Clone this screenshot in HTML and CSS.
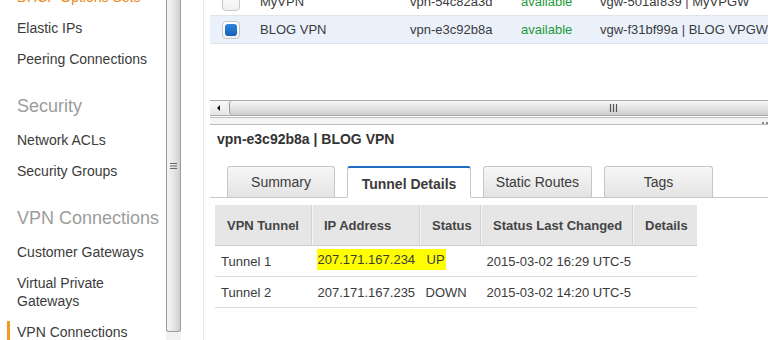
FILE: index.html
```html
<!DOCTYPE html>
<html lang="en">
<head>
    <meta charset="UTF-8">
    <title>VPN Connections</title>
    <link rel="stylesheet" href="styles.css">
</head>
<body>
    <div class="page">
        <nav class="sidebar">
            <a class="nav-item orange">DHCP Options Sets</a>
            <a class="nav-item">Elastic IPs</a>
            <a class="nav-item">Peering Connections</a>
            <h3 class="nav-heading">Security</h3>
            <a class="nav-item">Network ACLs</a>
            <a class="nav-item">Security Groups</a>
            <h3 class="nav-heading">VPN Connections</h3>
            <a class="nav-item">Customer Gateways</a>
            <a class="nav-item">Virtual Private<br>Gateways</a>
            <a class="nav-item active">VPN Connections</a>
        </nav>

        <div class="vscroll">
            <div class="vthumb">
                <svg width="7" height="8" viewBox="0 0 7 8"><path d="M0 1.5h7M0 4h7M0 6.5h7" stroke="#666" stroke-width="1"/></svg>
            </div>
        </div>

        <main class="content">
            <div class="list-pane">
                <table class="vpn-list">
                    <tr>
                        <td class="check"><span class="box"></span></td>
                        <td class="name">MyVPN</td>
                        <td>vpn-54c82a3d</td>
                        <td class="ok">available</td>
                        <td>vgw-501af839 <span class="sep">|</span> MyVPGW</td>
                    </tr>
                    <tr class="selected">
                        <td class="check"><span class="box on"></span></td>
                        <td class="name">BLOG VPN</td>
                        <td>vpn-e3c92b8a</td>
                        <td class="ok">available</td>
                        <td>vgw-f31bf99a <span class="sep">|</span> BLOG VPGW</td>
                    </tr>
                </table>
            </div>

            <div class="hscroll">
                <div class="arrow"></div>
                <div class="hthumb">
                    <svg width="9" height="8" viewBox="0 0 9 8"><path d="M1.5 0v8M4.5 0v8M7.5 0v8" stroke="#555" stroke-width="1.2"/></svg>
                </div>
            </div>
            <div class="splitter"><span class="dots"></span></div>

            <section class="details">
                <h2>vpn-e3c92b8a | BLOG VPN</h2>
                <ul class="tabs">
                    <li class="tab w-summary">Summary</li>
                    <li class="tab active w-tunnel">Tunnel Details</li>
                    <li class="tab w-routes">Static Routes</li>
                    <li class="tab w-tags">Tags</li>
                </ul>

                <table class="tunnels">
                    <thead>
                        <tr>
                            <th class="c1">VPN Tunnel</th>
                            <th class="c2">IP Address</th>
                            <th class="c3">Status</th>
                            <th class="c4">Status Last Changed</th>
                            <th class="c5">Details</th>
                        </tr>
                    </thead>
                    <tbody>
                        <tr>
                            <td>Tunnel 1</td>
                            <td class="hl-left"><span class="mark">207.171.167.234</span></td>
                            <td class="hl-right"><span class="mark">UP</span></td>
                            <td>2015-03-02 16:29 UTC-5</td>
                            <td></td>
                        </tr>
                        <tr>
                            <td>Tunnel 2</td>
                            <td>207.171.167.235</td>
                            <td>DOWN</td>
                            <td>2015-03-02 14:20 UTC-5</td>
                            <td></td>
                        </tr>
                    </tbody>
                </table>
            </section>
        </main>
    </div>
</body>
</html>
```

FILE: styles.css
```css
body {
    margin: 0;
    padding: 0;
    background-color: #fff;
    font-family: "Liberation Sans", Arial, sans-serif;
    color: #333;
}

.page {
    display: flex;
    width: 768px;
    height: 340px;
    overflow: hidden;
}

/* Sidebar */
.sidebar {
    width: 166px;
    flex-shrink: 0;
    margin-top: -18px;
}

.nav-item {
    display: block;
    padding: 6px 0 7px 17px;
    font-size: 14px;
    line-height: 18px;
    color: #3b3b3b;
}

.nav-item.orange {
    color: #ec8a1c;
}

.nav-item.active {
    background: linear-gradient(#f39a22, #f39a22) 7px 4px / 3px 100% no-repeat;
}

.nav-heading {
    margin: 20px 0 8px;
    padding-left: 17px;
    font-size: 18px;
    line-height: 22px;
    font-weight: normal;
    color: #9c9c9c;
}

/* Vertical scrollbar */
.vscroll {
    width: 15px;
    flex-shrink: 0;
    background-color: #f1f1f1;
}

.vthumb {
    height: 332px;
    box-sizing: border-box;
    border: 1px solid #9a9a9a;
    border-top: none;
    border-radius: 0 0 3px 3px;
    background: linear-gradient(to right, #f4f4f4, #e8e8e8 45%, #cfcfcf);
    display: flex;
    align-items: center;
    justify-content: center;
}

/* Content */
.content {
    flex: 1;
    min-width: 0;
    margin-left: 22px;
    border-left: 1px solid #e8e8e8;
}

.list-pane {
    height: 100px;
    overflow: hidden;
    padding-left: 6px;
}

.vpn-list {
    margin-top: -12px;
    border-collapse: collapse;
    table-layout: fixed;
    width: 600px;
    font-size: 13px;
    color: #3b3b3b;
}

.vpn-list td {
    height: 27px;
    padding: 0;
    white-space: nowrap;
    border-bottom: 1px solid #dfe3ea;
}

.vpn-list td.check {
    width: 38px;
    padding-left: 12px;
}

.vpn-list td.name {
    width: 150px;
}

.vpn-list td:nth-child(3) {
    width: 111px;
}

.vpn-list td.ok {
    width: 79px;
    color: #1f9a3a;
}

.vpn-list tr.selected td {
    background-color: #eaf1fb;
}

.sep {
    color: #5a3a5e;
}

.box {
    display: block;
    width: 16px;
    height: 16px;
    border: 1px solid #c8c8c8;
    border-radius: 4px;
    background: linear-gradient(#fff, #f0f0f0);
    position: relative;
}

.box.on::after {
    content: "";
    position: absolute;
    left: 2px;
    top: 2px;
    width: 12px;
    height: 12px;
    border-radius: 3px;
    background: linear-gradient(#2f84dd, #1560bd);
}

/* Horizontal scrollbar and splitter */
.hscroll {
    display: flex;
    height: 16px;
    margin: 0 0 0 6px;
    box-sizing: border-box;
    border-top: 1px solid #a8a8a8;
    border-bottom: 1px solid #a8a8a8;
    background-color: #f0f0f0;
}

.arrow {
    width: 17px;
    flex-shrink: 0;
    background: linear-gradient(#fafafa, #e6e6e6);
    position: relative;
}

.arrow::after {
    content: "";
    position: absolute;
    left: 7px;
    top: 4px;
    border-style: solid;
    border-width: 3px 3px 3px 0;
    border-color: transparent #111 transparent transparent;
}

.hthumb {
    flex: 1;
    margin: 0 -10px 0 2px;
    border-left: 1px solid #9a9a9a;
    border-radius: 3px 0 0 3px;
    background: linear-gradient(#f6f6f6, #e4e4e4 50%, #cdcdcd);
    display: flex;
    align-items: center;
    padding-left: 379px;
}

.splitter {
    height: 6px;
    margin: 1px 0 0 6px;
    border-top: 1px solid #bdbdbd;
    border-bottom: 1px solid #bdbdbd;
    background-color: #f4f4f4;
    display: flex;
    justify-content: flex-end;
    align-items: center;
}

.dots {
    width: 6px;
    height: 2px;
    background: repeating-linear-gradient(to right, #888 0 2px, transparent 2px 4px);
    margin-top: 3px;
}

/* Details */
.details {
    padding-left: 6px;
}

.details h2 {
    margin: 5px 0 18px 7px;
    font-size: 14px;
    line-height: 18px;
    color: #333;
}

.tabs {
    display: flex;
    gap: 12px;
    margin: 0;
    padding: 0 0 0 17px;
    list-style: none;
    border-bottom: 1px solid #c8c8c8;
}

.tab {
    box-sizing: border-box;
    margin-bottom: -1px;
    height: 32px;
    line-height: 30px;
    border: 1px solid #c6c6c6;
    border-bottom-color: #c8c8c8;
    border-radius: 3px 3px 0 0;
    background: linear-gradient(#f7f7f7, #e3e3e3);
    text-align: center;
    font-size: 14px;
    color: #3b3b3b;
}

.tab.active {
    background: #fff;
    border-top: 2px solid #1f6cc3;
    border-bottom-color: #fff;
    line-height: 33px;
    font-weight: bold;
}

.w-summary { width: 108px; }
.w-tunnel { width: 124px; }
.w-routes { width: 109px; }
.w-tags { width: 109px; }

.tunnels {
    margin: 7px 0 0 5px;
    border-collapse: collapse;
    table-layout: fixed;
    font-size: 13px;
    color: #3b3b3b;
}

.tunnels th {
    height: 40px;
    padding: 0 0 0 12px;
    text-align: left;
    background-color: #e6e6e6;
    color: #444;
    border-left: 1px solid #d2d2d2;
    box-shadow: inset 1px 0 #f6f6f6;
    border-bottom: 1px solid #cdcdcd;
    white-space: nowrap;
}

.tunnels th.c1 {
    border-left: none;
    box-shadow: none;
}

.c1 { width: 84px; }
.c2 { width: 95px; }
.c3 { width: 48px; }
.c4 { width: 139px; }
.c5 { width: 52px; }

.tunnels td {
    height: 30px;
    padding: 0 0 0 6px;
    border-bottom: 1px solid #dcdcdc;
    white-space: nowrap;
}

.tunnels td.hl-left {
    padding-left: 5px;
}

.tunnels td.hl-left .mark {
    display: block;
    padding-left: 1px;
}

.tunnels td.hl-right {
    padding-left: 0;
}

.tunnels td.hl-right .mark {
    display: inline-block;
    padding: 0 1px 0 7px;
}

.mark {
    background-color: #ffff00;
    line-height: 21px;
    margin-top: -3px;
}
```
